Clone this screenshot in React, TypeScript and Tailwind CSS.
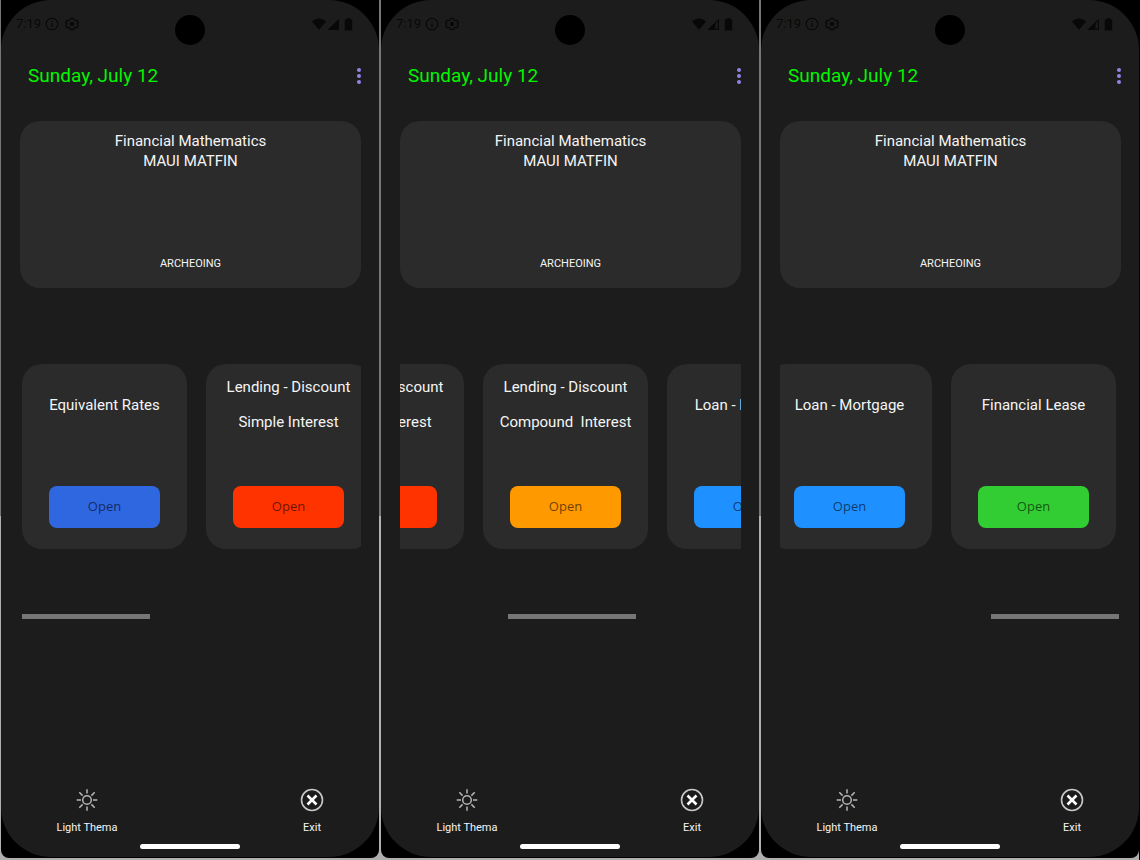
import React, { useLayoutEffect, useRef, useState } from 'react'

interface IModule {
  lines: string[]
  color: string
}

interface IPhone {
  id: string
  offset: number
  weakSignal: boolean
}

const modules: IModule[] = [
  { lines: ['Equivalent Rates'], color: 'bg-[#2f67e0]' },
  { lines: ['Lending - Discount', 'Simple Interest'], color: 'bg-[#ff3300]' },
  { lines: ['Lending - Discount', 'Compound  Interest'], color: 'bg-[#ff9900]' },
  { lines: ['Loan - Mortgage'], color: 'bg-[#1e90ff]' },
  { lines: ['Financial Lease'], color: 'bg-[#32cd32]' }
]

const phones: IPhone[] = [
  { id: 'start', offset: 0, weakSignal: false },
  { id: 'middle', offset: 287, weakSignal: true },
  { id: 'end', offset: 567, weakSignal: true }
]

function StatusBar ({ weakSignal }: { weakSignal: boolean }): React.JSX.Element {
  return (
    <div className="grid h-[60px] grid-cols-[1fr_30px_1fr] items-start text-[#080808]">
      <div className="flex items-center gap-1 pl-[15px] pt-4">
        <span className="text-[13px] leading-4">7:19</span>
        <svg width="14" height="14" viewBox="0 0 14 14" fill="none" stroke="currentColor">
          <circle cx="7" cy="7" r="5.8" strokeWidth="1.1" />
          <path d="M7 6.2v4M7 3.8v1.2" strokeWidth="1.2" />
        </svg>
        <svg width="14" height="14" viewBox="0 0 14 14" fill="none" stroke="currentColor" className="ml-0.5">
          <path d="M5.5 1.3h3l.5 1.6 1.3.8 1.7-.4 1.4 2.4-1.2 1.3 1.2 1.3-1.4 2.4-1.7-.4-1.3.8-.5 1.6h-3L5 11.1l-1.3-.8-1.7.4L.6 8.3 1.8 7 .6 5.7 2 3.3l1.7.4L5 2.9z" strokeWidth="1.2" />
          <circle cx="7" cy="7" r="1.8" fill="currentColor" />
        </svg>
      </div>
      <div className="mt-[15px] h-[30px] rounded-full bg-black" />
      <div className="flex items-center justify-end pr-[26px] pt-[18px]">
        <svg width="41" height="13" viewBox="0 0 41 13" fill="currentColor">
          <path d="M0 3.6C4-.5 10-.5 14 3.600L7 11.8z" />
          {weakSignal
            ? <>
              <path d="M23.500 4.300V12H15.500z" />
              <path d="M26.400 2v9.400H16.800z" fill="none" stroke="currentColor" strokeWidth="1.100" />
            </>
            : <path d="M27 .8V12H15.500z" />}
          <path d="M35 0h3v1.300h2.200v11.200h-7.400V1.300H35z" />
        </svg>
      </div>
    </div>
  )
}

function Carousel ({ offset }: { offset: number }): React.JSX.Element {
  const scroller = useRef<HTMLDivElement>(null)
  const [progress, setProgress] = useState(0)

  function handleScroll (): void {
    const el = scroller.current
    if (el === null) return
    const max = el.scrollWidth - el.clientWidth
    setProgress(max > 0 ? el.scrollLeft / max : 0)
  }

  useLayoutEffect(() => {
    if (scroller.current !== null) scroller.current.scrollLeft = offset
    handleScroll()
  }, [offset])

  return (
    <div>
      <div
        ref={scroller}
        onScroll={handleScroll}
        className="overflow-x-auto [scrollbar-width:none]"
      >
        <div className="flex w-max gap-[19px] pl-0.5 pr-[5px]">
          {modules.map(({ lines, color }) => (
            <div
              key={lines.join()}
              className="flex w-[165px] flex-col items-center rounded-[20px] bg-[#2b2b2b] pb-[21px] text-center"
            >
              <h2 className="flex h-[82px] flex-col justify-center text-[15px] leading-[35px] whitespace-pre text-[#f5f5f5]">
                {lines.map((line) => <span key={line}>{line}</span>)}
              </h2>
              <button
                type="button"
                className={`mt-10 h-[42px] w-[111px] rounded-lg font-['Open_Sans'] text-[13px] text-black/60 ${color}`}
              >
                Open
              </button>
            </div>
          ))}
        </div>
      </div>
      <div className="mt-[65px] flex px-0.5">
        <div style={{ flexGrow: progress }} />
        <div className="h-[5px] w-32 shrink-0 bg-[#767676]" />
        <div style={{ flexGrow: 1 - progress }} />
      </div>
    </div>
  )
}

function Phone ({ offset, weakSignal }: Omit<IPhone, 'id'>): React.JSX.Element {
  return (
    <section className="flex overflow-hidden rounded-b-lg bg-black pb-px">
      <div className="flex min-w-0 flex-1 flex-col rounded-[50px] bg-[#1c1c1c]">
        <StatusBar weakSignal={weakSignal} />
        <header className="flex items-center justify-between pl-[27px] pr-[14px]">
          <h1 className="text-[19px] leading-8 text-[#00f500]">Sunday, July 12</h1>
          <button type="button" aria-label="Menu" className="flex w-3 flex-col items-center gap-0.5">
            <span className="size-1 rounded-full bg-[#9880e5]" />
            <span className="size-1 rounded-full bg-[#9880e5]" />
            <span className="size-1 rounded-full bg-[#9880e5]" />
          </button>
        </header>
        <main className="pt-[29px] pr-[18px] pl-[19px]">
          <div className="flex h-[167px] flex-col items-center rounded-[20px] bg-[#2b2b2b] pt-2.5 pb-4 text-[#f5f5f5]">
            <p className="text-[15px] leading-5">Financial Mathematics</p>
            <p className="text-[15px] leading-5">MAUI MATFIN</p>
            <p className="mt-auto text-[11px] leading-4">ARCHEOING</p>
          </div>
          <div className="pt-[76px]">
            <Carousel offset={offset} />
          </div>
        </main>
        <footer className="mt-auto">
          <div className="flex justify-between pr-[31px] pl-[50px] text-[11px] leading-4 text-[#f5f5f5]">
            <button type="button" className="flex w-[72px] flex-col items-center gap-2">
              <svg width="24" height="24" viewBox="0 0 24 24" fill="none" stroke="#b5b5b5" strokeWidth="1.5">
                <circle cx="12" cy="12" r="4.3" />
                <path d="M12 1.200v4.300M12 18.500v4.300M1.700 12h4.300M18 12h4.300M4.300 4.300l3.300 3.300M16.400 16.400l3.300 3.300M19.700 4.300l-3.300 3.300M7.600 16.400l-3.300 3.300" />
              </svg>
              Light Thema
            </button>
            <button type="button" className="flex w-[72px] flex-col items-center gap-2">
              <svg width="24" height="24" viewBox="0 0 24 24" fill="none">
                <circle cx="12" cy="12" r="10.5" stroke="#c8c8c8" strokeWidth="1.6" />
                <path d="M7.500 7.500l9 9M16.500 7.500l-9 9" stroke="#fff" strokeWidth="2.600" />
              </svg>
              Exit
            </button>
          </div>
          <div className="mx-auto mt-2 mb-2 h-[5px] w-[100px] rounded-full bg-white" />
        </footer>
      </div>
    </section>
  )
}

function App (): React.JSX.Element {
  return (
    <div className="grid min-h-screen grid-cols-3 gap-0.5 border-r border-black bg-linear-to-b from-[#777777] from-60% to-[#b0b0b0] to-60% pb-0.5 pl-px font-[Roboto,sans-serif]">
      {phones.map(({ id, offset, weakSignal }) => (
        <Phone key={id} offset={offset} weakSignal={weakSignal} />
      ))}
    </div>
  )
}

export default App
